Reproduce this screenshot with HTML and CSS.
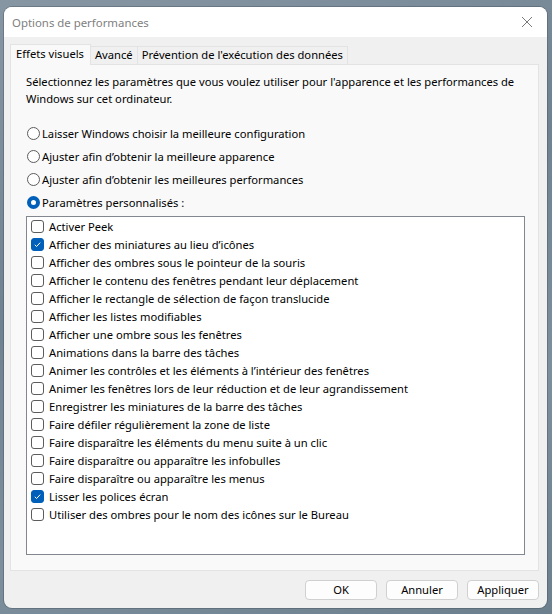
FILE: index.html
```html
<!DOCTYPE html>
<html lang="fr">
<head>
<meta charset="utf-8">
<title>Options de performances</title>
<link rel="stylesheet" href="styles.css">
</head>
<body>
<div class="window">
  <div class="titlebar">
    <span class="title">Options de performances</span>
    <svg class="close" width="12" height="12" viewBox="0 0 12 12"><path d="M1 1L11 11M11 1L1 11" stroke="#7a7a7a" stroke-width="1"/></svg>
  </div>
  <div class="body">
    <div class="tabs">
      <div class="tab active">Effets visuels</div>
      <div class="tab">Avancé</div>
      <div class="tab">Prévention de l'exécution des données</div>
    </div>
    <div class="panel">
      <p class="intro">Sélectionnez les paramètres que vous voulez utiliser pour l'apparence et les performances de Windows sur cet ordinateur.</p>
      <div class="radios">
        <label class="radio"><span class="rb"></span>Laisser Windows choisir la meilleure configuration</label>
        <label class="radio"><span class="rb"></span>Ajuster afin d’obtenir la meilleure apparence</label>
        <label class="radio"><span class="rb"></span>Ajuster afin d’obtenir les meilleures performances</label>
        <label class="radio"><span class="rb on"></span>Paramètres personnalisés :</label>
      </div>
      <div class="list">
        <div class="item"><span class="cb"></span>Activer Peek</div>
        <div class="item"><span class="cb on"><svg width="13" height="13" viewBox="0 0 13 13"><path d="M3.8 6.8L5.6 8.5L9.2 4.6" fill="none" stroke="#fff" stroke-width="1"/></svg></span>Afficher des miniatures au lieu d’icônes</div>
        <div class="item"><span class="cb"></span>Afficher des ombres sous le pointeur de la souris</div>
        <div class="item"><span class="cb"></span>Afficher le contenu des fenêtres pendant leur déplacement</div>
        <div class="item"><span class="cb"></span>Afficher le rectangle de sélection de façon translucide</div>
        <div class="item"><span class="cb"></span>Afficher les listes modifiables</div>
        <div class="item"><span class="cb"></span>Afficher une ombre sous les fenêtres</div>
        <div class="item"><span class="cb"></span>Animations dans la barre des tâches</div>
        <div class="item"><span class="cb"></span>Animer les contrôles et les éléments à l’intérieur des fenêtres</div>
        <div class="item"><span class="cb"></span>Animer les fenêtres lors de leur réduction et de leur agrandissement</div>
        <div class="item"><span class="cb"></span>Enregistrer les miniatures de la barre des tâches</div>
        <div class="item"><span class="cb"></span>Faire défiler régulièrement la zone de liste</div>
        <div class="item"><span class="cb"></span>Faire disparaître les éléments du menu suite à un clic</div>
        <div class="item"><span class="cb"></span>Faire disparaître ou apparaître les infobulles</div>
        <div class="item"><span class="cb"></span>Faire disparaître ou apparaître les menus</div>
        <div class="item"><span class="cb on"><svg width="13" height="13" viewBox="0 0 13 13"><path d="M3.8 6.8L5.6 8.5L9.2 4.6" fill="none" stroke="#fff" stroke-width="1"/></svg></span>Lisser les polices écran</div>
        <div class="item"><span class="cb"></span>Utiliser des ombres pour le nom des icônes sur le Bureau</div>
      </div>
    </div>
    <div class="buttons">
      <button class="btn">OK</button>
      <button class="btn">Annuler</button>
      <button class="btn">Appliquer</button>
    </div>
  </div>
</div>
</body>
</html>
```

FILE: styles.css
```css
* { box-sizing: border-box; }
html, body { margin: 0; padding: 0; }
body {
  width: 552px;
  height: 614px;
  overflow: hidden;
  background: linear-gradient(160deg, #8796a3 0%, #6f8291 40%, #7d8f9d 70%, #6c7f8d 100%);
  font-family: "Noto Sans", "Open Sans", sans-serif;
  font-size: 11.2px;
  color: #000;
  padding: 7px 0 0 4px;
}
.window {
  width: 543px;
  height: 601px;
  border-radius: 8px;
  background: #f0f0f0;
  overflow: hidden;
  display: flex;
  flex-direction: column;
  box-shadow: 0 0 0 1px rgba(60,70,80,0.35);
}
.titlebar {
  height: 30px;
  background: #fff;
  display: flex;
  align-items: center;
  justify-content: space-between;
  padding: 0 14px 0 8px;
  flex: none;
}
.title { color: #808080; font-size: 11.4px; }
.close { display: block; }
.body {
  flex: 1;
  display: flex;
  flex-direction: column;
  padding: 7px 8px 0 6px;
}
.tabs {
  display: flex;
  height: 20px;
  padding-left: 0;
  position: relative;
  z-index: 1;
}
.tab {
  height: 18px;
  margin-top: 2px;
  padding: 0 4px;
  border: 1px solid #e3e3e3;
  border-bottom: none;
  background: #f0f0f0;
  line-height: 16px;
  color: #000;
  white-space: nowrap;
}
.tab + .tab { border-left: none; }
.tab.active {
  height: 21px;
  margin-top: 0;
  background: #f9f9f9;
  padding: 0 6px 0 5px;
  line-height: 18px;
  border-right: 1px solid #e3e3e3;
}
.panel {
  height: 507px;
  background: #f9f9f9;
  border: 1px solid #e3e3e3;
  padding: 8px 13px 0 15px;
}
.intro {
  margin: 0;
  line-height: 17px;
}
.radios {
  margin-top: 15px;
  display: flex;
  flex-direction: column;
}
.radio {
  display: flex;
  align-items: center;
  height: 23px;
  gap: 2px;
  padding-left: 1px;
}
.rb {
  width: 13px;
  height: 13px;
  border-radius: 50%;
  border: 1px solid #5c5c5c;
  background: #fff;
  flex: none;
}
.rb.on {
  border: 4px solid #005fb8;
  background: #fff;
}
.list {
  margin-top: 2px;
  height: 339px;
  background: #fff;
  border: 1px solid #828790;
  padding: 0 0 0 4px;
}
.item {
  display: flex;
  align-items: center;
  height: 18px;
  gap: 5px;
  white-space: nowrap;
}
.cb {
  width: 13px;
  height: 13px;
  border: 1px solid #5c5c5c;
  border-radius: 3px;
  background: #fff;
  flex: none;
  display: flex;
  align-items: center;
  justify-content: center;
}
.cb.on {
  background: #005fb8;
  border-color: #005fb8;
}
.cb svg { display: block; flex: none; margin: -1px; }
.buttons {
  display: flex;
  justify-content: flex-end;
  gap: 9px;
  padding-top: 9px;
}
.btn {
  width: 72px;
  height: 20px;
  border: 1px solid #d0d0d0;
  border-radius: 4px;
  background: #fdfdfd;
  font-family: inherit;
  font-size: 11.2px;
  color: #000;
  padding: 0;
  line-height: 18px;
}
```
